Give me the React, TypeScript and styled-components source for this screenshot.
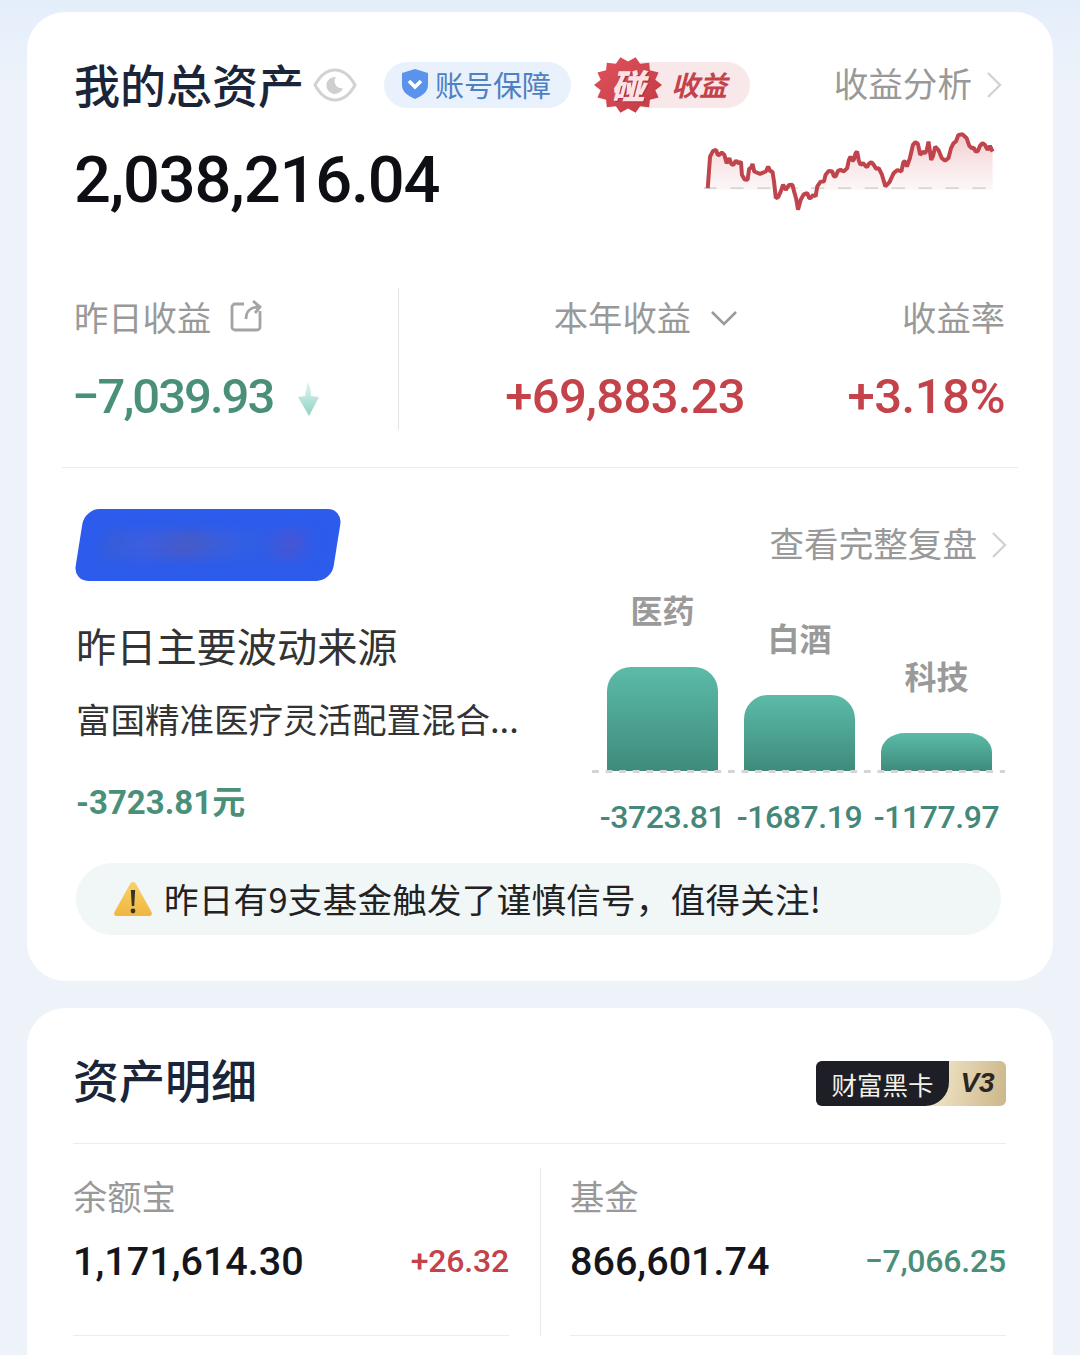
import styled, { createGlobalStyle } from "styled-components";

const CJK = `"Noto Sans CJK SC", "Noto Sans", sans-serif`;
const NUM = `Roboto, "Liberation Sans", sans-serif`;
const GREEN = "#4a8f7a";
const RED = "#c4424a";

const GlobalStyle = createGlobalStyle`
  html, body {
    margin: 0;
    height: 1355px;
    overflow: hidden;
    background: #eef3f9;
    font-family: ${CJK};
  }
  * { box-sizing: border-box; }
`;

const Page = styled.div`
  height: 1355px;
  overflow: hidden;
  padding: 12px 27px 0;
  background: linear-gradient(180deg, #e4eefb 0, #eef3f9 90px);
`;

const Card = styled.section`
  background: #fff;
  border-radius: 38px;
`;

const SummaryCard = styled(Card)`
  height: 969px;
  padding: 45px 35px 0;
  margin-bottom: 27px;
`;

const DetailCard = styled(Card)`
  height: 420px;
  padding: 51px 47px 0 46px;
`;

const TopRow = styled.div`
  display: flex;
  align-items: center;
  height: 56px;
  padding-left: 12px;
`;

const Title = styled.h1`
  margin: 0;
  padding-bottom: 4px;
  font-size: 46px;
  line-height: 52px;
  font-weight: 500;
  color: #1b2539;
  white-space: nowrap;
`;

const EyeIcon = styled.svg`
  width: 44px;
  height: 36px;
  margin-left: 9px;
  flex: none;
`;

const GuardPill = styled.div`
  display: flex;
  align-items: center;
  gap: 7px;
  width: 187px;
  height: 46px;
  margin-left: 27px;
  padding: 0 0 3px 18px;
  border-radius: 23px;
  background: #e8f1fc;
  color: #4f80c4;
  font-size: 29px;
  white-space: nowrap;
`;

const BumpPill = styled.div`
  position: relative;
  display: flex;
  align-items: center;
  width: 150px;
  height: 46px;
  margin-left: 29px;
  padding: 0 0 3px 71px;
  border-radius: 23px;
  background: #f9e8ea;
  color: ${RED};
  font-size: 28px;
  font-weight: 700;
  font-style: italic;
  white-space: nowrap;
`;

const BurstWrap = styled.div`
  position: absolute;
  left: -6px;
  top: -6px;
  width: 68px;
  height: 58px;
  display: flex;
  align-items: center;
  justify-content: center;
`;

const BurstIcon = styled.svg`
  position: absolute;
  inset: 0;
  width: 100%;
  height: 100%;
`;

const BurstText = styled.span`
  position: relative;
  color: #fbe3e5;
  font-size: 34px;
  line-height: 1;
  font-weight: 900;
  font-style: italic;
  text-shadow: 1px 1px 0 #a92f3a;
`;

const LinkText = styled.div`
  display: flex;
  align-items: center;
  margin-left: auto;
  padding-bottom: 6px;
  color: #999;
  white-space: nowrap;
  font-size: 34.6px;
`;

const Chevron = styled.svg`
  width: 16px;
  height: 28px;
  margin-left: 14px;
  margin-top: 6px;
  flex: none;
`;

const AnalysisLink = styled(LinkText)`
  margin-right: 16px;
`;

const WorthRow = styled.div`
  display: flex;
  align-items: flex-start;
  justify-content: space-between;
  height: 104px;
  margin-top: 11px;
  padding-left: 12px;
  padding-right: 21px;
`;

const Worth = styled.div`
  margin-top: 14px;
  font-family: ${NUM};
  font-size: 65px;
  line-height: 84px;
  font-weight: 500;
  letter-spacing: -1.2px;
  color: #0d0f14;
`;

const Spark = styled.svg`
  width: 293px;
  height: 83px;
  margin-top: 6px;
  flex: none;
`;

const StatsRow = styled.div`
  display: flex;
  height: 142px;
  margin-top: 60px;
  padding: 0 13px 0 12px;
`;

const StatLeft = styled.div`
  width: 325px;
  border-right: 1px solid #e3e3e3;
`;

const StatMid = styled.div`
  width: 346px;
  display: flex;
  flex-direction: column;
  align-items: flex-end;
`;

const StatRight = styled.div`
  flex: 1;
  display: flex;
  flex-direction: column;
  align-items: flex-end;
`;

const StatLabel = styled.div`
  display: flex;
  align-items: center;
  height: 56px;
  color: #999;
  font-size: 34.3px;
  white-space: nowrap;
`;

const StatValue = styled.div<{ $color: string; $track: number }>`
  display: flex;
  align-items: center;
  height: 60px;
  margin-top: 22px;
  font-family: ${NUM};
  font-size: 49px;
  font-weight: 500;
  letter-spacing: ${(p) => p.$track}px;
  color: ${(p) => p.$color};
  white-space: nowrap;
`;

const LossValue = styled(StatValue)`
  margin-left: -2px;
`;

const ShareIcon = styled.svg`
  width: 34px;
  height: 34px;
  margin-left: 18px;
`;

const DownArrow = styled.svg`
  width: 24px;
  height: 34px;
  margin-left: 24px;
  margin-top: 6px;
`;

const CaretIcon = styled.svg`
  width: 28px;
  height: 16px;
  margin-left: 19px;
  margin-right: 7px;
  margin-top: 4px;
`;

const Rule = styled.div`
  height: 1px;
  background: #ececec;
`;

const CardRule = styled(Rule)`
  margin-top: 37px;
`;

const ReviewHead = styled.div`
  display: flex;
  align-items: center;
  justify-content: space-between;
  height: 72px;
  margin-top: 41px;
  padding-left: 14px;
`;

const BlurTag = styled.div`
  position: relative;
  width: 258px;
  height: 72px;
  margin-left: 3px;
  border-radius: 15px;
  background: #2d5cec;
  transform: skewX(-9deg);
  overflow: hidden;
`;

const BlurSmear = styled.div`
  position: absolute;
  left: 24px;
  right: 24px;
  top: 22px;
  height: 28px;
  opacity: 0.55;
  background: linear-gradient(90deg, #3d5fc8, #4a60d8 20%, #5c5aa8 40%, #3f63d8 60%, #3060e0 75%, #6050c0 90%, #2d5cec);
  filter: blur(6px);
`;

const ReviewLink = styled(LinkText)`
  margin-right: 11px;
`;

const ReviewBody = styled.div`
  display: flex;
  height: 282px;
`;

const Source = styled.div`
  width: 530px;
  padding: 38px 0 0 14px;
  flex: none;
`;

const SourceTitle = styled.div`
  font-size: 40.2px;
  line-height: 52px;
  color: #333;
  white-space: nowrap;
`;

const SourceName = styled.div`
  margin-top: 23px;
  font-size: 34.5px;
  line-height: 48px;
  color: #333;
  white-space: nowrap;
`;

const SourceAmount = styled.div`
  margin-top: 37px;
  font-family: ${NUM}, ${CJK};
  font-size: 33px;
  line-height: 48px;
  font-weight: 700;
  color: ${GREEN};
  white-space: nowrap;
`;

const Chart = styled.div`
  flex: 1;
  margin-right: 14px;
  display: flex;
  flex-direction: column;
`;

const Plot = styled.div`
  position: relative;
  display: flex;
  align-items: flex-end;
  gap: 26px;
  height: 190px;
  padding: 0 13px 0 15px;

  &::after {
    content: "";
    position: absolute;
    left: 0;
    right: 0;
    bottom: -2px;
    height: 3px;
    background-image: linear-gradient(90deg, #d4d4d4 50%, transparent 50%);
    background-size: 13.6px 3px;
    background-repeat: repeat-x;
  }
`;

const BarCol = styled.div`
  width: 111px;
  display: flex;
  flex-direction: column;
  align-items: center;
`;

const BarLabel = styled.div`
  font-size: 32px;
  line-height: 44px;
  font-weight: 700;
  color: #9a9a9a;
  margin-bottom: 36px;
  white-space: nowrap;
`;

const Bar = styled.div<{ $h: number }>`
  width: 100%;
  height: ${(p) => p.$h}px;
  border-radius: 24px 24px 0 0 / ${(p) => Math.min(24, p.$h * 0.5)}px ${(p) => Math.min(24, p.$h * 0.5)}px 0 0;
  background: linear-gradient(180deg, #5cbba8, #3e8b7b);
`;

const BarValues = styled.div`
  display: flex;
  gap: 26px;
  margin-top: 24px;
  padding: 0 13px 0 15px;
`;

const BarValue = styled.div`
  width: 111px;
  display: flex;
  justify-content: center;
  font-family: ${NUM};
  font-size: 32px;
  line-height: 44px;
  font-weight: 500;
  letter-spacing: -0.4px;
  color: #44887a;
  white-space: nowrap;
`;

const Notice = styled.div`
  display: flex;
  align-items: center;
  width: 925px;
  height: 72px;
  margin: 0 0 0 14px;
  padding: 0 0 3px 37px;
  border-radius: 36px;
  background: #f1f6f7;
  font-size: 34.5px;
  letter-spacing: 0.3px;
  color: #222;
  white-space: nowrap;
`;

const WarnIcon = styled.svg`
  width: 40px;
  height: 38px;
  margin: 3px 11px 0 0;
  flex: none;
`;

const DetailHead = styled.div`
  display: flex;
  align-items: center;
  justify-content: space-between;
  height: 48px;
`;

const DetailTitle = styled.h2`
  margin: 0;
  padding-bottom: 10px;
  font-size: 46px;
  line-height: 48px;
  font-weight: 500;
  color: #1b2539;
  white-space: nowrap;
`;

const BlackBadge = styled.div`
  display: flex;
  width: 190px;
  height: 45px;
  border-radius: 6px;
  overflow: hidden;
  background: linear-gradient(100deg, #d9c49a, #f1e6c8 60%, #cdb68a);
`;

const BlackLabel = styled.div`
  width: 133px;
  display: flex;
  align-items: center;
  justify-content: center;
  background: #1d1e26;
  border-radius: 0 0 24px 0;
  color: #f3f0e8;
  font-size: 25.5px;
  white-space: nowrap;
`;

const LevelLabel = styled.div`
  flex: 1;
  display: flex;
  align-items: center;
  justify-content: center;
  font-family: "Liberation Sans", sans-serif;
  font-size: 28px;
  font-weight: 700;
  font-style: italic;
  color: #2a2621;
`;

const DetailRule = styled(Rule)`
  margin-top: 36px;
`;

const AssetGrid = styled.div`
  display: grid;
  grid-template-columns: 467px 1fr;
  margin-top: 24px;
`;

const AssetCell = styled.div<{ $split?: boolean }>`
  height: 168px;
  padding-left: ${(p) => (p.$split ? "29px" : "0")};
  border-left: ${(p) => (p.$split ? "1px solid #e8e8e8" : "none")};
`;

const AssetLabel = styled.div`
  height: 60px;
  padding-bottom: 6px;
  display: flex;
  align-items: center;
  font-size: 34.3px;
  color: #999;
  white-space: nowrap;
`;

const AssetRow = styled.div`
  display: flex;
  align-items: center;
  justify-content: space-between;
  height: 62px;
  margin-top: 5px;
  padding-bottom: 6px;
`;

const AssetCellInner = styled.div`
  width: 436px;
  height: 168px;
  border-bottom: 1px solid #ececec;
`;

const AssetAmount = styled.div`
  font-family: ${NUM};
  font-size: 39.5px;
  font-weight: 500;
  color: #14161b;
  white-space: nowrap;
`;

const AssetChange = styled.div<{ $color: string }>`
  font-family: ${NUM};
  font-size: 32px;
  font-weight: 500;
  letter-spacing: -0.2px;
  color: ${(p) => p.$color};
  white-space: nowrap;
`;

const SPARK_POINTS = [
  [385, 445], [392, 350], [410, 330], [420, 345], [435, 345], [442, 370], [450, 355], [462, 375],
  [470, 362], [485, 365], [488, 405], [505, 420], [510, 385], [520, 372], [525, 395], [560, 395],
  [567, 380], [580, 395], [590, 475], [605, 455], [612, 435], [620, 450], [640, 435], [645, 455],
  [657, 510], [665, 480], [685, 460], [695, 475], [710, 470], [715, 440], [735, 425], [740, 405],
  [760, 395], [770, 410], [785, 390], [805, 385], [815, 350], [825, 360], [835, 335], [845, 375],
  [860, 378], [870, 372], [885, 375], [900, 385], [920, 440], [945, 400], [968, 395], [975, 365],
  [985, 380], [1003, 315], [1018, 312], [1025, 345], [1040, 340], [1050, 305], [1058, 360],
  [1070, 320], [1090, 355], [1110, 355], [1125, 310], [1140, 285], [1165, 295], [1180, 325],
  [1192, 335], [1205, 318], [1220, 315], [1228, 330], [1235, 318], [1243, 335],
];

// extra small zigzag between the traced points, the real line is noisy
function roughen(points: number[][]) {
  const out: number[][] = [];
  points.forEach((p, i) => {
    out.push(p);
    const next = points[i + 1];
    if (next && next[0] - p[0] >= 10) {
      out.push([(p[0] + next[0]) / 2, (p[1] + next[1]) / 2 + (i % 2 === 0 ? 7 : -7)]);
    }
  });
  return out;
}

function burstPoints(cx: number, cy: number, outer: number, inner: number, count: number) {
  const pts: string[] = [];
  for (let i = 0; i < count * 2; i++) {
    const r = i % 2 === 0 ? outer : inner;
    const a = (Math.PI * i) / count;
    pts.push(`${(cx + r * Math.cos(a)).toFixed(1)},${(cy + r * Math.sin(a) * 0.84).toFixed(1)}`);
  }
  return pts.join(" ");
}

function ChevronRight() {
  return (
    <Chevron viewBox="0 0 16 28">
      <path d="M2 2l12 12L2 26" fill="none" stroke="#d2d2d2" strokeWidth="2.4" />
    </Chevron>
  );
}

function Sparkline() {
  const line = roughen(SPARK_POINTS).map((p) => p.join(",")).join(" ");
  return (
    <Spark viewBox="375 270 880 250">
      <defs>
        <linearGradient id="sparkFill" x1="0" y1="0" x2="0" y2="1">
          <stop offset="0" stopColor="#e8a7ac" stopOpacity="0.6" />
          <stop offset="0.75" stopColor="#f7e4e5" stopOpacity="0.3" />
          <stop offset="1" stopColor="#fff" stopOpacity="0" />
        </linearGradient>
      </defs>
      <polygon points={`385,450 ${line} 1243,450`} fill="url(#sparkFill)" />
      <line x1="372" y1="445" x2="1240" y2="445" stroke="#d6d6d6" strokeWidth="5" strokeDasharray="40 41" />
      <polyline points={line} fill="none" stroke="#c0444c" strokeWidth="12" strokeLinejoin="bevel" />
    </Spark>
  );
}

const bars = [
  { name: "医药", h: 104, value: "-3723.81" },
  { name: "白酒", h: 76, value: "-1687.19" },
  { name: "科技", h: 38, value: "-1177.97" },
];

export default function App() {
  return (
    <Page>
      <GlobalStyle />
      <SummaryCard>
        <TopRow>
          <Title>我的总资产</Title>
          <EyeIcon viewBox="0 0 44 36">
            <path d="M2 18C8 7 15 3 22 3s14 4 20 15c-6 11-13 15-20 15S8 29 2 18z" fill="none" stroke="#d2d2d2" strokeWidth="3" />
            <path d="M23 10a8.5 8.5 0 1 0 7 11 7 7 0 0 1-7-11z" fill="#cfcfcf" />
          </EyeIcon>
          <GuardPill>
            <svg width="26" height="30" viewBox="0 0 26 30">
              <path d="M13 0l13 4v12c0 7-6 11-13 14C6 27 0 23 0 16V4z" fill="#5b93ec" />
              <path d="M7 12l6 6 6-6" fill="none" stroke="#fff" strokeWidth="3.6" />
            </svg>
            账号保障
          </GuardPill>
          <BumpPill>
            <BurstWrap>
              <BurstIcon viewBox="0 0 68 58">
                <defs>
                  <linearGradient id="burstFill" x1="0" y1="0" x2="1" y2="1">
                    <stop offset="0" stopColor="#e0525c" />
                    <stop offset="1" stopColor="#c23a44" />
                  </linearGradient>
                </defs>
                <polygon points={burstPoints(34, 29, 34, 28, 14)} fill="url(#burstFill)" />
              </BurstIcon>
              <BurstText>碰</BurstText>
            </BurstWrap>
            收益
          </BumpPill>
          <AnalysisLink>
            收益分析
            <ChevronRight />
          </AnalysisLink>
        </TopRow>

        <WorthRow>
          <Worth>2,038,216.04</Worth>
          <Sparkline />
        </WorthRow>

        <StatsRow>
          <StatLeft>
            <StatLabel>
              昨日收益
              <ShareIcon viewBox="0 0 34 34">
                <path d="M15 5H6a3 3 0 0 0-3 3v20a3 3 0 0 0 3 3h22a3 3 0 0 0 3-3v-16" fill="none" stroke="#a4a4a4" strokeWidth="2.8" />
                <path d="M17 20c0-7 4-12 12-12M24 2l7 6-5 6" fill="none" stroke="#a4a4a4" strokeWidth="2.8" />
              </ShareIcon>
            </StatLabel>
            <LossValue $color={GREEN} $track={-2}>
              −7,039.93
              <DownArrow viewBox="0 0 24 34">
                <defs>
                  <linearGradient id="arrowFill" x1="0" y1="0" x2="0" y2="1">
                    <stop offset="0" stopColor="#e4f4f0" />
                    <stop offset="1" stopColor="#8fd3c4" />
                  </linearGradient>
                </defs>
                <path d="M10 0c3 4 4 8 4 14l8 1-10 19L1 15l7-1c1-5 2-10 2-14z" fill="url(#arrowFill)" />
              </DownArrow>
            </LossValue>
          </StatLeft>
          <StatMid>
            <StatLabel>
              本年收益
              <CaretIcon viewBox="0 0 28 16">
                <path d="M2 2l12 12L26 2" fill="none" stroke="#9a9a9a" strokeWidth="2.6" />
              </CaretIcon>
            </StatLabel>
            <StatValue $color={RED} $track={-0.7}>+69,883.23</StatValue>
          </StatMid>
          <StatRight>
            <StatLabel>收益率</StatLabel>
            <StatValue $color={RED} $track={-0.5}>+3.18%</StatValue>
          </StatRight>
        </StatsRow>

        <CardRule />

        <ReviewHead>
          <BlurTag>
            <BlurSmear />
          </BlurTag>
          <ReviewLink>
            查看完整复盘
            <ChevronRight />
          </ReviewLink>
        </ReviewHead>

        <ReviewBody>
          <Source>
            <SourceTitle>昨日主要波动来源</SourceTitle>
            <SourceName>富国精准医疗灵活配置混合...</SourceName>
            <SourceAmount>-3723.81元</SourceAmount>
          </Source>
          <Chart>
            <Plot>
              {bars.map((b) => (
                <BarCol key={b.name}>
                  <BarLabel>{b.name}</BarLabel>
                  <Bar $h={b.h} />
                </BarCol>
              ))}
            </Plot>
            <BarValues>
              {bars.map((b) => (
                <BarValue key={b.name}>{b.value}</BarValue>
              ))}
            </BarValues>
          </Chart>
        </ReviewBody>

        <Notice>
          <WarnIcon viewBox="0 0 40 38">
            <defs>
              <linearGradient id="warnFill" x1="0" y1="0" x2="0" y2="1">
                <stop offset="0" stopColor="#f8d26a" />
                <stop offset="1" stopColor="#f0b640" />
              </linearGradient>
            </defs>
            <path d="M20 2c1.500 0 2.500 1 3 2l15.500 28c1 2 0 4-2 4h-33c-2 0-3-2-2-4L17 4c.5-1 1.500-2 3-2z" fill="url(#warnFill)" />
            <path d="M17.800 10h4.400l-1 16h-2.400z" fill="#3a3324" />
            <circle cx="20" cy="31" r="2.400" fill="#3a3324" />
          </WarnIcon>
          昨日有9支基金触发了谨慎信号，值得关注!
        </Notice>
      </SummaryCard>

      <DetailCard>
        <DetailHead>
          <DetailTitle>资产明细</DetailTitle>
          <BlackBadge>
            <BlackLabel>财富黑卡</BlackLabel>
            <LevelLabel>V3</LevelLabel>
          </BlackBadge>
        </DetailHead>
        <DetailRule />
        <AssetGrid>
          <AssetCell>
            <AssetCellInner>
              <AssetLabel>余额宝</AssetLabel>
              <AssetRow>
                <AssetAmount>1,171,614.30</AssetAmount>
                <AssetChange $color={RED}>+26.32</AssetChange>
              </AssetRow>
            </AssetCellInner>
          </AssetCell>
          <AssetCell $split>
            <AssetCellInner>
              <AssetLabel>基金</AssetLabel>
              <AssetRow>
                <AssetAmount>866,601.74</AssetAmount>
                <AssetChange $color={GREEN}>−7,066.25</AssetChange>
              </AssetRow>
            </AssetCellInner>
          </AssetCell>
        </AssetGrid>
      </DetailCard>
    </Page>
  );
}
